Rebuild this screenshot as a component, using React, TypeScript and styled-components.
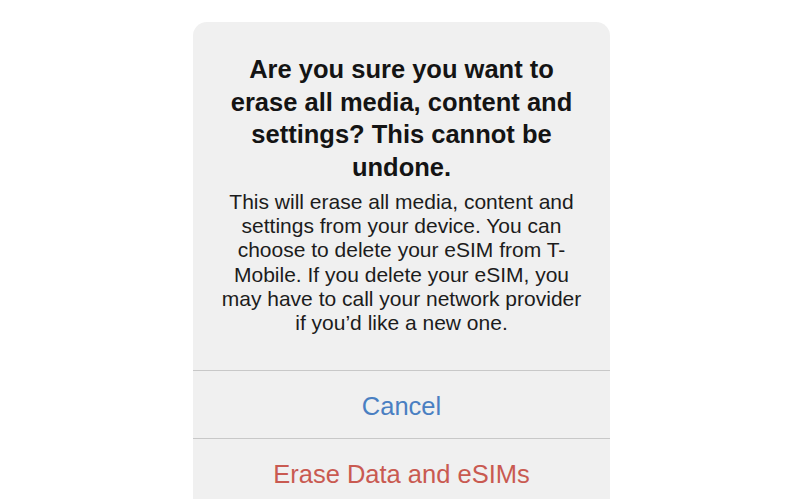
import React from 'react';
import styled, {createGlobalStyle} from 'styled-components';

const GlobalStyle = createGlobalStyle`
  html, body {
    margin: 0;
    padding: 0;
    background: #ffffff;
    font-family: "Liberation Sans", Arial, sans-serif;
    -webkit-font-smoothing: antialiased;
  }
`;

const Page = styled.div`
  display: flex;
  justify-content: center;
  align-items: flex-start;
  padding: 22px 0 0 4px;
  height: 499px;
  box-sizing: border-box;
  overflow: hidden;
`;

const Sheet = styled.div`
  width: 417px;
  background: #f0f0f0;
  border-radius: 14px 14px 0 0;
  display: flex;
  flex-direction: column;
`;

const Header = styled.div`
  flex-shrink: 0;
  padding: 31px 18px 35px;
  display: flex;
  flex-direction: column;
  gap: 7px;
  text-align: center;
`;

const Title = styled.h2`
  margin: 0;
  padding: 0 12px;
  font-size: 25.5px;
  line-height: 32.5px;
  font-weight: 700;
  color: #141414;
`;

const Message = styled.p`
  margin: 0;
  padding: 0 6px;
  font-size: 21px;
  line-height: 24.2px;
  font-weight: 400;
  color: #1c1c1c;
`;

const Action = styled.button<{$tone: 'default' | 'destructive'}>`
  all: unset;
  flex-shrink: 0;
  box-sizing: border-box;
  height: 68px;
  padding-top: 3px;
  display: flex;
  align-items: center;
  justify-content: center;
  border-top: 1px solid #c8c8c8;
  font-family: "Liberation Sans", Arial, sans-serif;
  font-size: 25.5px;
  color: ${p => (p.$tone === 'destructive' ? '#c95a51' : '#4a7fc2')};
  cursor: pointer;
`;

const EraseDialog: React.FC = () => {
  return (
    <Sheet role="alertdialog">
      <Header>
        <Title>
          Are you sure you want to erase all media, content and settings? This
          cannot be undone.
        </Title>
        <Message>
          This will erase all media, content and settings from your device. You
          can choose to delete your eSIM from T-Mobile. If you delete your eSIM,
          you may have to call your network provider if you’d like a new one.
        </Message>
      </Header>
      <Action $tone="default">Cancel</Action>
      <Action $tone="destructive">Erase Data and eSIMs</Action>
    </Sheet>
  );
};

const App: React.FC = () => (
  <>
    <GlobalStyle />
    <Page>
      <EraseDialog />
    </Page>
  </>
);

export default App;
